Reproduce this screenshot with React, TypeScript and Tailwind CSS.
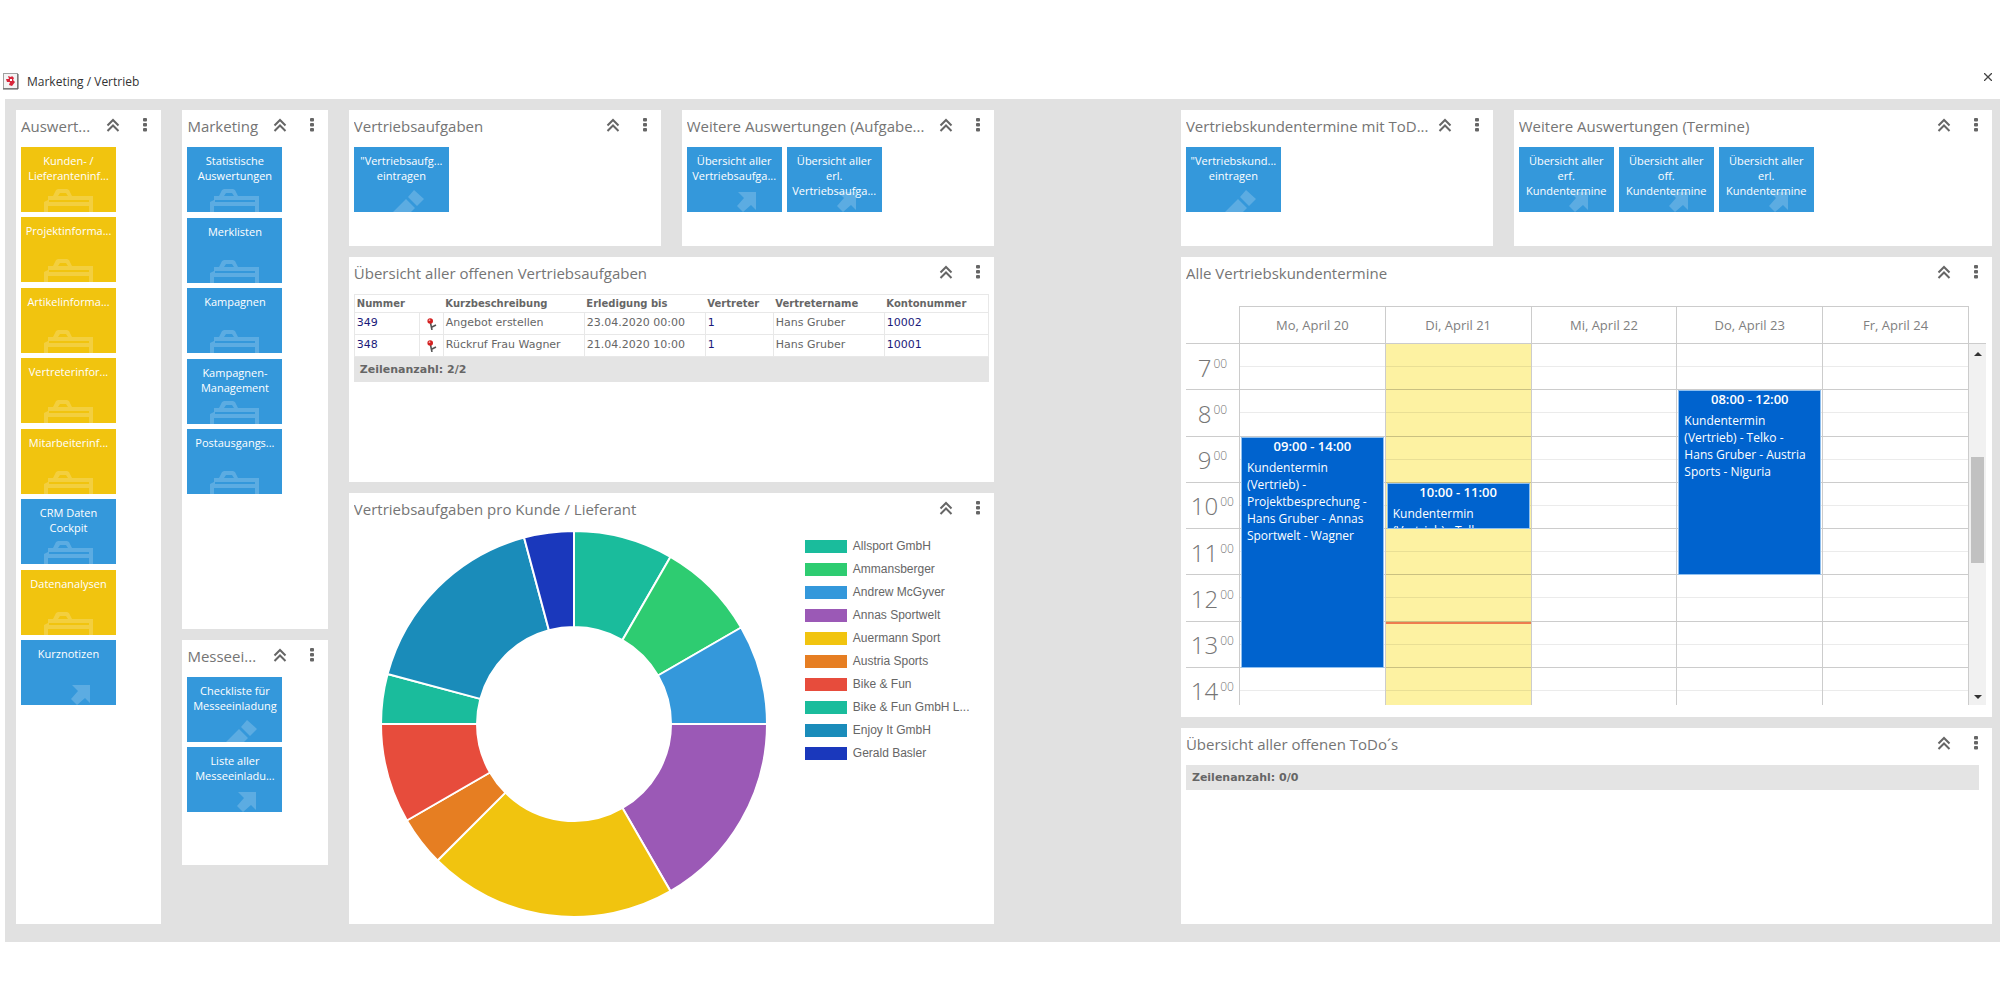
import type { ReactNode } from 'react';
import clsx from 'clsx';

type TileIcon = 'case' | 'arrow' | 'pencil';

interface TileData {
  lines: string[];
  color: 'yellow' | 'blue';
  icon: TileIcon;
}

const evaluationTiles: TileData[] = [
  { lines: ['Kunden- /', 'Lieferanteninf...'], color: 'yellow', icon: 'case' },
  { lines: ['Projektinforma...'], color: 'yellow', icon: 'case' },
  { lines: ['Artikelinforma...'], color: 'yellow', icon: 'case' },
  { lines: ['Vertreterinfor...'], color: 'yellow', icon: 'case' },
  { lines: ['Mitarbeiterinf...'], color: 'yellow', icon: 'case' },
  { lines: ['CRM Daten', 'Cockpit'], color: 'blue', icon: 'case' },
  { lines: ['Datenanalysen'], color: 'yellow', icon: 'case' },
  { lines: ['Kurznotizen'], color: 'blue', icon: 'arrow' },
];

const marketingTiles: TileData[] = [
  { lines: ['Statistische', 'Auswertungen'], color: 'blue', icon: 'case' },
  { lines: ['Merklisten'], color: 'blue', icon: 'case' },
  { lines: ['Kampagnen'], color: 'blue', icon: 'case' },
  { lines: ['Kampagnen-', 'Management'], color: 'blue', icon: 'case' },
  { lines: ['Postausgangs...'], color: 'blue', icon: 'case' },
];

const fairTiles: TileData[] = [
  { lines: ['Checkliste für', 'Messeeinladung'], color: 'blue', icon: 'pencil' },
  { lines: ['Liste aller', 'Messeeinladu...'], color: 'blue', icon: 'arrow' },
];

const taskTiles: TileData[] = [
  { lines: ['"Vertriebsaufg...', 'eintragen'], color: 'blue', icon: 'pencil' },
];

const taskReportTiles: TileData[] = [
  { lines: ['Übersicht aller', 'Vertriebsaufga...'], color: 'blue', icon: 'arrow' },
  { lines: ['Übersicht aller', 'erl.', 'Vertriebsaufga...'], color: 'blue', icon: 'arrow' },
];

const appointmentTiles: TileData[] = [
  { lines: ['"Vertriebskund...', 'eintragen'], color: 'blue', icon: 'pencil' },
];

const appointmentReportTiles: TileData[] = [
  { lines: ['Übersicht aller', 'erf.', 'Kundentermine'], color: 'blue', icon: 'arrow' },
  { lines: ['Übersicht aller', 'off.', 'Kundentermine'], color: 'blue', icon: 'arrow' },
  { lines: ['Übersicht aller', 'erl.', 'Kundentermine'], color: 'blue', icon: 'arrow' },
];

const tasks = [
  {
    id: '349',
    text: 'Angebot erstellen',
    due: '23.04.2020 00:00',
    agent: '1',
    agentName: 'Hans Gruber',
    account: '10002',
  },
  {
    id: '348',
    text: 'Rückruf Frau Wagner',
    due: '21.04.2020 10:00',
    agent: '1',
    agentName: 'Hans Gruber',
    account: '10001',
  },
];

const chartData = [
  { label: 'Allsport GmbH', value: 2, color: '#1abc9c' },
  { label: 'Ammansberger', value: 2, color: '#2ecc71' },
  { label: 'Andrew McGyver', value: 2, color: '#3498db' },
  { label: 'Annas Sportwelt', value: 4, color: '#9b59b6' },
  { label: 'Auermann Sport', value: 5, color: '#f1c40f' },
  { label: 'Austria Sports', value: 1, color: '#e67e22' },
  { label: 'Bike & Fun', value: 2, color: '#e74c3c' },
  { label: 'Bike & Fun GmbH L...', value: 1, color: '#1abc9c' },
  { label: 'Enjoy It GmbH', value: 4, color: '#1a8cba' },
  { label: 'Gerald Basler', value: 1, color: '#1a38bc' },
];

const FIRST_HOUR = 7;
const hours = [7, 8, 9, 10, 11, 12, 13, 14];

interface CalendarEvent {
  from: number;
  to: number;
  time: string;
  text: string;
}

interface CalendarDay {
  label: string;
  today?: boolean;
  events: CalendarEvent[];
}

const days: CalendarDay[] = [
  {
    label: 'Mo, April 20',
    events: [
      {
        from: 9,
        to: 14,
        time: '09:00 - 14:00',
        text: 'Kundentermin (Vertrieb) - Projektbesprechung - Hans Gruber - Annas Sportwelt - Wagner',
      },
    ],
  },
  {
    label: 'Di, April 21',
    today: true,
    events: [{ from: 10, to: 11, time: '10:00 - 11:00', text: 'Kundentermin (Vertrieb) - Telko' }],
  },
  { label: 'Mi, April 22', events: [] },
  {
    label: 'Do, April 23',
    events: [
      {
        from: 8,
        to: 12,
        time: '08:00 - 12:00',
        text: 'Kundentermin (Vertrieb) - Telko - Hans Gruber - Austria Sports - Niguria',
      },
    ],
  },
  { label: 'Fr, April 24', events: [] },
];

const hourOffset = (hour: number) => `${((hour - FIRST_HOUR) / hours.length) * 100}%`;

const TileGlyph = ({ icon }: { icon: TileIcon }) => (
  <svg
    viewBox="0 0 95 65"
    className="pointer-events-none absolute inset-0 h-full w-full text-white/20"
    fill="currentColor"
    aria-hidden="true"
  >
    {icon === 'case' && (
      <path d="M23 65V55l4-2v-4h5l3-6 2-1h9l2 1 3 6h21v16h-4v-6H27v6zM37 49h10l-2-3h-6zM28 53v2h40v-2z" fillRule="evenodd" />
    )}
    {icon === 'arrow' && <path d="M51 45h18v18l-5-5-8 7-6-6 7-8z" />}
    {icon === 'pencil' && <path d="M60 43l10 9-7 7-9-9zM52 52l9 9-4 4H39z" />}
  </svg>
);

const Tile = ({ tile }: { tile: TileData }) => (
  <button
    type="button"
    className={clsx(
      'relative flex h-[65px] w-[95px] shrink-0 flex-col items-center overflow-hidden pt-[6px] text-[11px] leading-[15px] text-white',
      tile.color === 'yellow' ? 'bg-[#f1c40f]' : 'bg-[#3498db]',
    )}
  >
    <TileGlyph icon={tile.icon} />
    {tile.lines.map((line) => (
      <span key={line} className="relative whitespace-nowrap">
        {line}
      </span>
    ))}
  </button>
);

const TileList = ({ tiles, className }: { tiles: TileData[]; className?: string }) => (
  <div className={clsx('flex gap-[5px] px-[5px]', className)}>
    {tiles.map((tile) => (
      <Tile key={tile.lines.join(' ')} tile={tile} />
    ))}
  </div>
);

interface PanelProps {
  title: string;
  className?: string;
  children: ReactNode;
}

const Panel = ({ title, className, children }: PanelProps) => (
  <section className={clsx('bg-white', className)}>
    <header className="flex h-[37px] items-start pl-[5px]">
      <h2 className="min-w-0 flex-1 overflow-hidden pt-[5px] text-[15px] leading-[22px] whitespace-nowrap text-[#757575]">
        {title}
      </h2>
      <button type="button" aria-label="Einklappen" className="flex h-[30px] w-8 items-center justify-center">
        <svg width="14" height="14" viewBox="0 0 14 14" fill="none" stroke="#666" strokeWidth="2">
          <path d="M1.500 7.500L7 2l5.500 5.500M1.500 13L7 7.500l5.500 5.500" />
        </svg>
      </button>
      <button type="button" aria-label="Menü" className="flex h-[30px] w-8 items-center justify-center">
        <svg width="4" height="14" viewBox="0 0 4 14" fill="#666">
          <rect width="4" height="3.500" rx="1" />
          <rect y="5" width="4" height="3.500" rx="1" />
          <rect y="10" width="4" height="3.500" rx="1" />
        </svg>
      </button>
    </header>
    {children}
  </section>
);

const PinIcon = () => (
  <svg width="10" height="12" viewBox="0 0 10 12" aria-hidden="true">
    <path d="M3.500 5l1.500 7M5 9l4-2" stroke="#555" strokeWidth="1.600" fill="none" />
    <circle cx="3.200" cy="3" r="2.800" fill="#d32020" />
    <circle cx="2.500" cy="2.200" r="0.900" fill="#f3a0a0" />
  </svg>
);

const RowCount = ({ text }: { text: string }) => (
  <div className="h-[25px] bg-[#e4e4e4] pl-[6px] font-['DejaVu_Sans',sans-serif] text-[11px] leading-[25px] font-bold text-[#666]">
    {text}
  </div>
);

const TaskTable = () => (
  <div className="mr-[5px] ml-[5px] font-['DejaVu_Sans',sans-serif] text-[11px] text-[#666]">
    <table className="w-full table-fixed border-collapse text-left">
      <colgroup>
        <col className="w-[65px]" />
        <col className="w-[24px]" />
        <col className="w-[141px]" />
        <col className="w-[121px]" />
        <col className="w-[68px]" />
        <col className="w-[111px]" />
        <col />
      </colgroup>
      <thead>
        <tr className="h-[18px] border border-[#e8e8e8] text-[10px]">
          <th className="pl-[2px]">Nummer</th>
          <th />
          <th className="pl-[2px]">Kurzbeschreibung</th>
          <th className="pl-[2px]">Erledigung bis</th>
          <th className="pl-[2px]">Vertreter</th>
          <th className="pl-[2px]">Vertretername</th>
          <th className="pl-[2px]">Kontonummer</th>
        </tr>
      </thead>
      <tbody>
        {tasks.map((task) => (
          <tr key={task.id} className="h-[22px]">
            <td className="border border-[#e8e8e8] pl-[2px] text-[#1a1a7a]">{task.id}</td>
            <td className="border border-[#e8e8e8] pl-[7px]">
              <PinIcon />
            </td>
            <td className="border border-[#e8e8e8] pl-[2px]">{task.text}</td>
            <td className="border border-[#e8e8e8] pl-[2px]">{task.due}</td>
            <td className="border border-[#e8e8e8] pl-[2px] text-[#1a1a7a]">{task.agent}</td>
            <td className="border border-[#e8e8e8] pl-[2px]">{task.agentName}</td>
            <td className="border border-[#e8e8e8] pl-[2px] text-[#1a1a7a]">{task.account}</td>
          </tr>
        ))}
      </tbody>
    </table>
    <RowCount text="Zeilenanzahl: 2/2" />
  </div>
);

const CENTER = 194;
const OUTER = 193;
const INNER = 97;

const point = (radius: number, share: number) => {
  const angle = share * 2 * Math.PI - Math.PI / 2;
  return `${CENTER + radius * Math.cos(angle)} ${CENTER + radius * Math.sin(angle)}`;
};

const DonutChart = () => {
  const total = chartData.reduce((sum, item) => sum + item.value, 0);
  let used = 0;

  return (
    <div className="flex items-start pl-[31px]">
      <svg width="388" height="388" viewBox="0 0 388 388" role="img" aria-label="Vertriebsaufgaben pro Kunde">
        {chartData.map((item) => {
          const start = used / total;
          used += item.value;
          const end = used / total;
          return (
            <path
              key={item.label}
              d={`M${point(OUTER, start)}A${OUTER} ${OUTER} 0 0 1 ${point(OUTER, end)}L${point(INNER, end)}A${INNER} ${INNER} 0 0 0 ${point(INNER, start)}Z`}
              fill={item.color}
              stroke="#fff"
              strokeWidth="2"
            />
          );
        })}
      </svg>
      <ul className="ml-[37px] flex flex-col gap-[10px] pt-[10px] font-['Liberation_Sans',sans-serif] text-[12px] leading-[13px] text-[#666]">
        {chartData.map((item) => (
          <li key={item.label} className="flex gap-[6px] whitespace-nowrap">
            <span className="h-[13px] w-[42px]" style={{ backgroundColor: item.color }} />
            {item.label}
          </li>
        ))}
      </ul>
    </div>
  );
};

const EventBox = ({ event }: { event: CalendarEvent }) => (
  <div
    className="absolute right-[1px] left-[1px] overflow-hidden border border-[#8fc0f0] bg-[#0063ce] px-[5px] leading-[17px] text-white"
    style={{ top: hourOffset(event.from), height: hourOffset(FIRST_HOUR + event.to - event.from) }}
  >
    <div className="mb-[4px] text-center text-[13px] font-semibold">{event.time}</div>
    <div className="text-[12px]">{event.text}</div>
  </div>
);

const Calendar = () => (
  <div className="mt-[12px] mr-[6px] ml-[5px]">
    <div className="flex h-[38px] border-b border-[#ccc] pr-[17px] pl-[53px]">
      <div className="grid flex-1 grid-cols-5 border-t border-l border-[#ccc] text-center text-[13px] leading-[36px] text-[#808080]">
        {days.map((day) => (
          <div key={day.label} className="border-r border-[#ccc]">
            {day.label}
          </div>
        ))}
      </div>
    </div>
    <div className="flex h-[361px] overflow-hidden">
      <div className="grid h-[370px] w-[53px] shrink-0 grid-rows-8">
        {hours.map((hour) => (
          <div
            key={hour}
            className="flex items-center justify-center gap-[2px] border-b border-[#ccc] pt-[2px] text-[24px] leading-none font-light text-[#757575]"
          >
            {hour}
            <span className="pb-[8px] text-[12px]">00</span>
          </div>
        ))}
      </div>
      <div className="grid h-[370px] flex-1 grid-cols-5 border-l border-[#ccc]">
        {days.map((day) => (
          <div
            key={day.label}
            className={clsx(
              'relative grid grid-rows-8 border-r border-[#ccc]',
              day.today && 'bg-[#fdf2a2]',
            )}
          >
            {hours.map((hour) => (
              <div key={hour} className="flex flex-col border-b border-black/20">
                <div className="flex-1 border-b border-black/8" />
                <div className="flex-1" />
              </div>
            ))}
            {day.events.map((event) => (
              <EventBox key={event.time} event={event} />
            ))}
            {day.today && (
              <div className="absolute right-0 left-0 h-[2px] bg-[#ee7d4e]" style={{ top: hourOffset(13) }} />
            )}
          </div>
        ))}
      </div>
      <div className="flex w-[17px] flex-col items-center justify-between bg-[#f1f1f1]">
        <button type="button" aria-label="Nach oben" className="flex h-[20px] w-full items-center justify-center">
          <svg width="8" height="4" viewBox="0 0 8 4" fill="#333">
            <path d="M0 4l4-4 4 4z" />
          </svg>
        </button>
        <div className="mt-[93px] mb-auto h-[106px] w-[13px] bg-[#c1c1c1]" />
        <button type="button" aria-label="Nach unten" className="flex h-[17px] w-full items-center justify-center">
          <svg width="8" height="4" viewBox="0 0 8 4" fill="#333">
            <path d="M0 0l4 4 4-4z" />
          </svg>
        </button>
      </div>
    </div>
  </div>
);

const AppIcon = () => (
  <svg width="16" height="17" viewBox="0 0 16 17" aria-hidden="true">
    <rect x="0.500" y="0.500" width="14" height="15" fill="#f4f4f4" stroke="#a0a0a0" />
    <path d="M0 16h15V1" fill="none" stroke="#555" />
    <path d="M5 3l3 1 1-1 2 2-1 2 2 2-3 4-3-1 1-3-3 0-1-3 3 0z" fill="#d8253a" />
    <path d="M7 6l2 0 0 2-2 0z" fill="#fff" />
  </svg>
);

export default function App() {
  return (
    <div className="font-['Open_Sans','Noto_Sans',sans-serif]">
      <div className="flex h-[99px] items-center gap-[8px] pt-16 pr-[8px] pl-[3px]">
        <AppIcon />
        <h1 className="flex-1 text-[12px] leading-[16px] text-[#333]">Marketing / Vertrieb</h1>
        <button type="button" aria-label="Schließen" className="pb-[9px]">
          <svg width="8" height="8" viewBox="0 0 8 8" stroke="#444" strokeWidth="1.300">
            <path d="M0 0l8 8M8 0L0 8" />
          </svg>
        </button>
      </div>

      <main className="ml-[5px] grid grid-cols-12 gap-x-[21px] bg-[#e1e1e1] pt-[11px] pr-[8px] pb-[18px] pl-[11px]">
        <Panel title="Auswert...">
          <TileList tiles={evaluationTiles} className="h-[558px] flex-col justify-between" />
        </Panel>

        <div className="flex flex-col gap-[11px]">
          <Panel title="Marketing" className="min-h-[519px]">
            <TileList tiles={marketingTiles} className="h-[347px] flex-col justify-between" />
          </Panel>
          <Panel title="Messeei..." className="min-h-[225px]">
            <TileList tiles={fairTiles} className="flex-col" />
          </Panel>
        </div>

        <div className="col-span-4 flex flex-col gap-[11px]">
          <div className="grid grid-cols-2 gap-[21px]">
            <Panel title="Vertriebsaufgaben" className="min-h-[136px]">
              <TileList tiles={taskTiles} />
            </Panel>
            <Panel title="Weitere Auswertungen (Aufgabe...">
              <TileList tiles={taskReportTiles} />
            </Panel>
          </div>
          <Panel title="Übersicht aller offenen Vertriebsaufgaben" className="min-h-[225px]">
            <TaskTable />
          </Panel>
          <Panel title="Vertriebsaufgaben pro Kunde / Lieferant" className="min-h-[431px]">
            <DonutChart />
          </Panel>
        </div>

        <div className="col-span-5 col-start-8 flex flex-col gap-[11px]">
          <div className="grid grid-cols-5 gap-[21px]">
            <Panel title="Vertriebskundentermine mit ToD..." className="col-span-2 min-h-[136px]">
              <TileList tiles={appointmentTiles} />
            </Panel>
            <Panel title="Weitere Auswertungen (Termine)" className="col-span-3">
              <TileList tiles={appointmentReportTiles} />
            </Panel>
          </div>
          <Panel title="Alle Vertriebskundentermine" className="min-h-[460px]">
            <Calendar />
          </Panel>
          <Panel title="Übersicht aller offenen ToDo´s" className="min-h-[196px]">
            <div className="mr-[13px] ml-[5px]">
              <RowCount text="Zeilenanzahl: 0/0" />
            </div>
          </Panel>
        </div>
      </main>
    </div>
  );
}
